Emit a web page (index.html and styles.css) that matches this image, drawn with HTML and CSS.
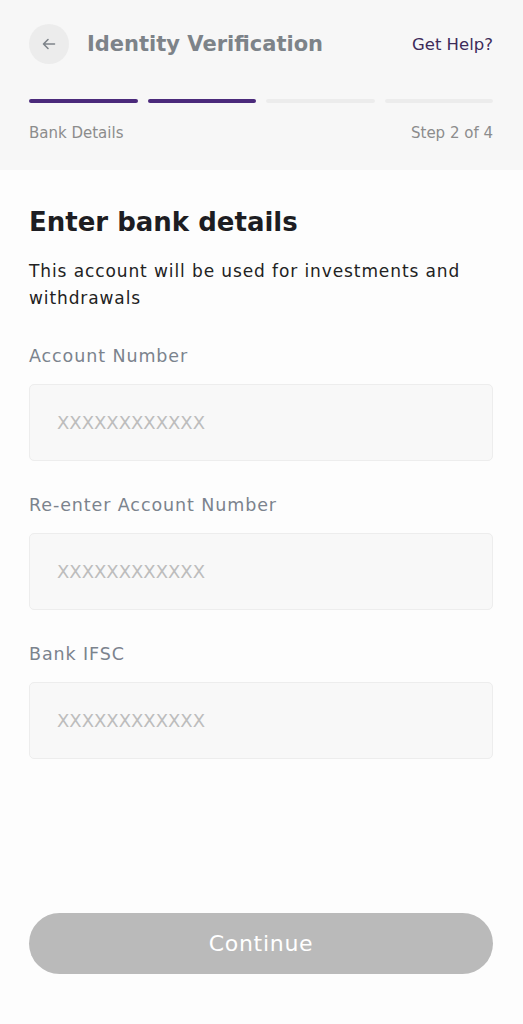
FILE: index.html
```html
<!DOCTYPE html>
<html>
<head>
  <title>Identity Verification</title>
  <link rel="stylesheet" href="styles.css">
</head>
<body>
  <div class="page">
    <header class="top">
      <div class="top-row">
        <button class="back-btn" aria-label="Back">
          <svg width="18" height="18" viewBox="0 0 18 18" fill="none">
            <path d="M14.5 9H3.5M8 4.5L3.5 9L8 13.5" stroke="#7d8389" stroke-width="1.6" stroke-linecap="round" stroke-linejoin="round"/>
          </svg>
        </button>
        <h1 class="title">Identity Verification</h1>
        <a class="help" href="#">Get Help?</a>
      </div>

      <div class="progress">
        <span class="seg done"></span>
        <span class="seg done"></span>
        <span class="seg"></span>
        <span class="seg"></span>
      </div>

      <div class="step-row">
        <span>Bank Details</span>
        <span>Step 2 of 4</span>
      </div>
    </header>

    <main class="content">
      <h2 class="heading">Enter bank details</h2>
      <p class="intro">This account will be used for investments and withdrawals</p>

      <div class="field">
        <label for="acc">Account Number</label>
        <input id="acc" type="text" placeholder="XXXXXXXXXXXX">
      </div>

      <div class="field">
        <label for="acc2">Re-enter Account Number</label>
        <input id="acc2" type="text" placeholder="XXXXXXXXXXXX">
      </div>

      <div class="field">
        <label for="ifsc">Bank IFSC</label>
        <input id="ifsc" type="text" placeholder="XXXXXXXXXXXX">
      </div>
    </main>

    <div class="footer">
      <button class="continue-btn" disabled>Continue</button>
    </div>
  </div>
</body>
</html>
```

FILE: styles.css
```css
body {
  font-family: "DejaVu Sans", Arial, sans-serif;
  background-color: #fdfdfd;
  margin: 0;
}

.page {
  display: flex;
  flex-direction: column;
  min-height: 1024px;
}

.top {
  background-color: #f7f7f7;
  padding: 24px 30px 0 29px;
  height: 146px;
}

.top-row {
  display: flex;
  align-items: center;
  height: 40px;
}

.back-btn {
  width: 40px;
  height: 40px;
  border-radius: 50%;
  border: none;
  background-color: #ececec;
  display: flex;
  align-items: center;
  justify-content: center;
  padding: 0;
  cursor: pointer;
}

.title {
  font-size: 21px;
  font-weight: 700;
  color: #7d8389;
  margin: 0 0 0 18px;
  flex: 1;
}

.help {
  font-size: 16.5px;
  color: #3d2b5a;
  text-decoration: none;
}

.progress {
  display: flex;
  gap: 10px;
  margin-top: 35px;
}

.seg {
  flex: 1;
  height: 4px;
  border-radius: 2px;
  background-color: #ececec;
}

.seg.done {
  background-color: #4b2a7b;
}

.step-row {
  display: flex;
  justify-content: space-between;
  margin-top: 20px;
  font-size: 15px;
  line-height: 20px;
  color: #8c8c8c;
}

.content {
  padding: 30px 30px 0 29px;
  flex: 1;
}

.heading {
  font-size: 26px;
  font-weight: 700;
  color: #1d1d22;
  margin: 0;
  line-height: 44px;
}

.intro {
  font-size: 17px;
  letter-spacing: 0.9px;
  line-height: 27px;
  color: #222;
  margin: 14px 0 0;
}

.field {
  margin-top: 32px;
}

label {
  display: block;
  font-size: 17.5px;
  letter-spacing: 0.9px;
  line-height: 24px;
  color: #7b838d;
  margin-bottom: 16px;
}

input {
  box-sizing: border-box;
  width: 100%;
  height: 77px;
  padding: 0 27px;
  border: 1px solid #ededed;
  border-radius: 5px;
  background-color: #f8f8f8;
  font-family: inherit;
  font-size: 18px;
  color: #333;
  outline: none;
}

input::placeholder {
  color: #bdbdbd;
}

.footer {
  padding: 0 30px 50px 29px;
}

.continue-btn {
  width: 100%;
  height: 61px;
  border: none;
  border-radius: 31px;
  background-color: #bababa;
  color: #fff;
  font-family: inherit;
  font-size: 22px;
  letter-spacing: 0.7px;
}
```
